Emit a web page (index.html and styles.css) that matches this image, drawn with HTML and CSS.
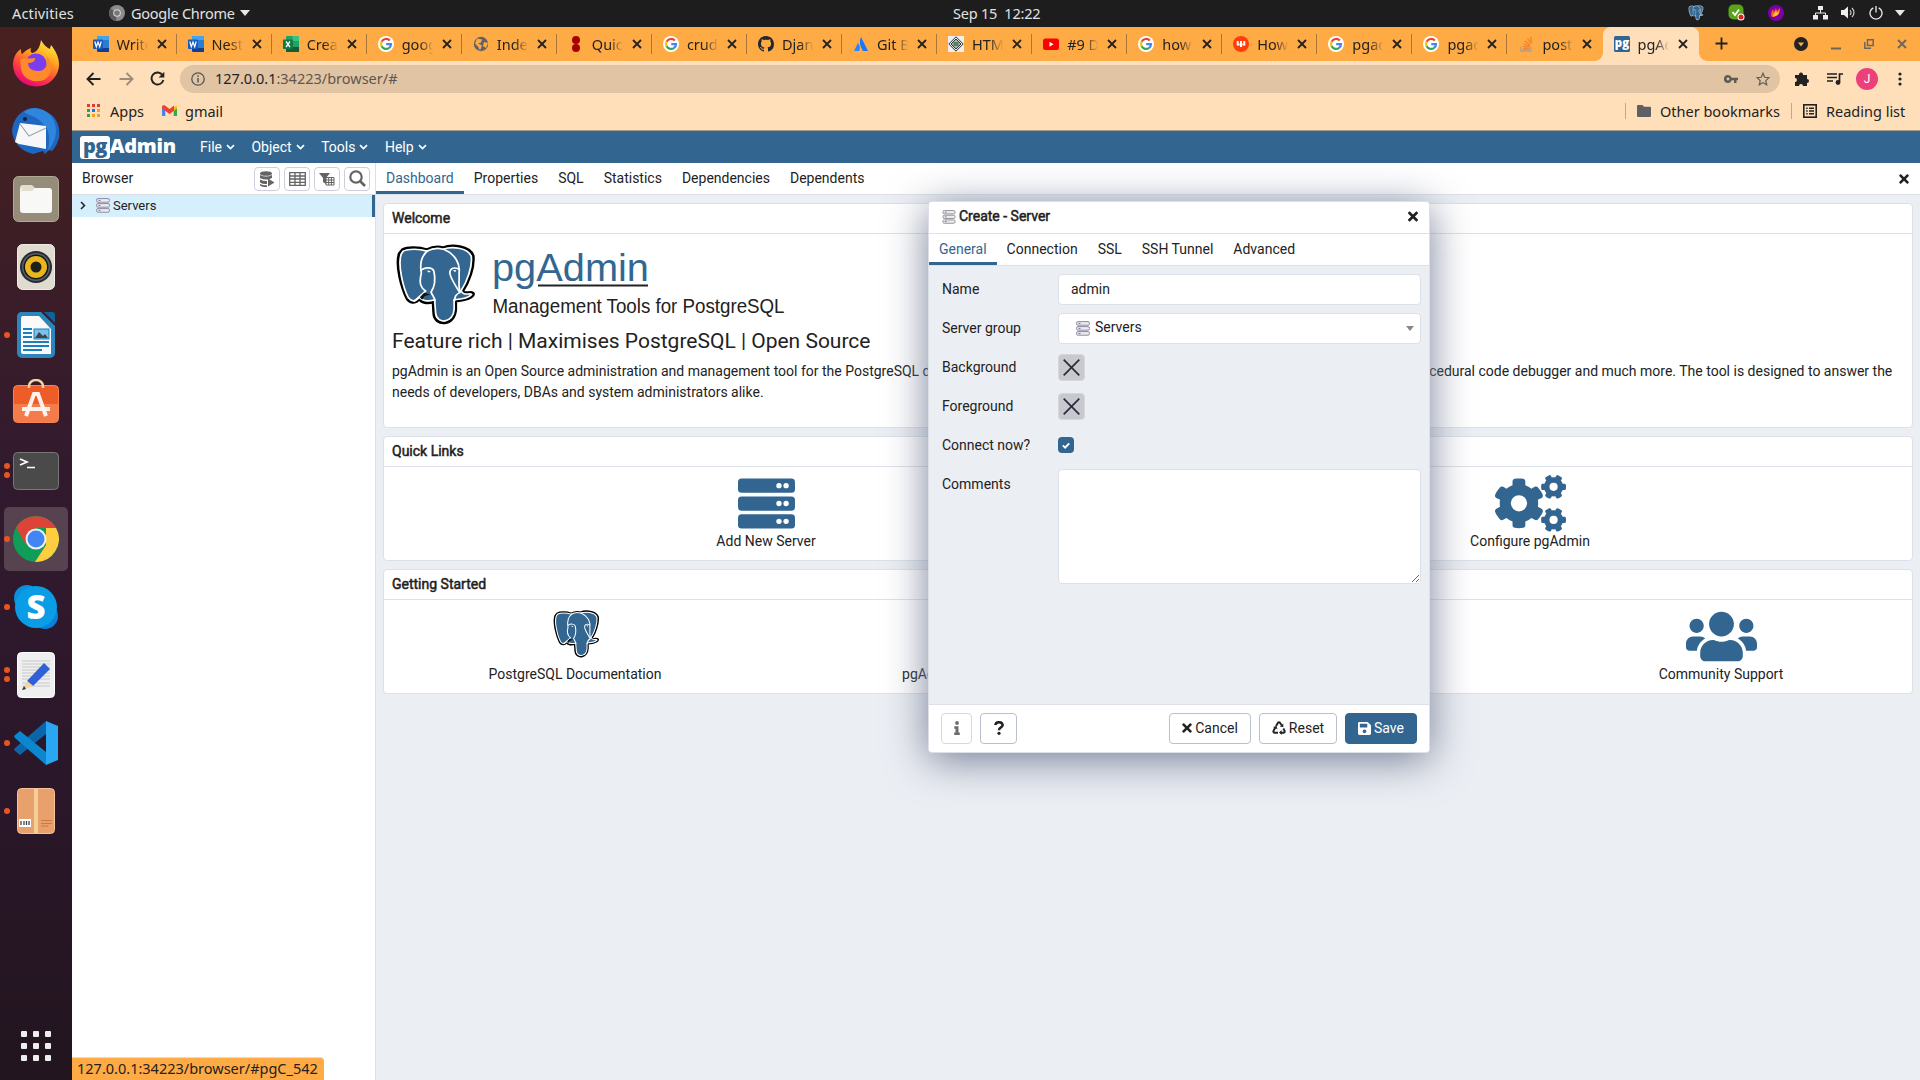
FILE: index.html
```html
<!DOCTYPE html>
<html lang="en">
<head>
<meta charset="utf-8">
<title>pgAdmin 4</title>
<link rel="stylesheet" href="styles.css">
</head>
<body>
<svg class="defs" aria-hidden="true">
  <symbol id="elephant" viewBox="-6 -6 232 256" preserveAspectRatio="none">
    <path d="M14 12C28 3 62 4 84 12C100 3 118 2 130 6C155-5 205 0 216 30C220 65 203 112 186 140C196 152 214 136 217 148C216 160 192 168 166 170L166 195C164 248 106 250 104 208L102 172C88 178 66 176 62 162C54 176 38 178 28 164C12 130-6 60 5 24Z" fill="#fff" stroke="#000" stroke-width="9" stroke-linejoin="round"/>
    <path d="M16 16C30 8 62 8 84 16C100 7 118 6 130 10C155 1 200 4 211 32C215 65 198 112 182 138C190 158 208 142 212 150C206 158 190 164 162 166L162 195C160 240 112 242 109 208L106 166C88 172 72 170 62 158C50 174 40 172 31 160C16 130 0 60 10 26Z" fill="#336791" stroke="#fff" stroke-width="5"/>
    <g fill="none" stroke="#fff" stroke-width="5" stroke-linecap="round">
      <path d="M88 14C65 32 64 60 68 84C60 118 68 130 80 139L48 170"/>
      <path d="M68 74C82 64 100 66 104 78C110 108 106 126 96 142C98 152 106 156 107 170"/>
      <path d="M132 10C166 25 180 58 176 82C178 108 172 128 180 142"/>
      <path d="M176 72C158 62 146 72 151 90C158 112 170 128 178 144C166 150 164 156 163 170"/>
    </g>
    <path d="M64 158L76 144L94 150L78 154L70 166Z" fill="#111"/>
    <path d="M83 76l12 1-5 6zM158 75l10-1-3 7z" fill="#fff"/>
  </symbol>
  <symbol id="g" viewBox="0 0 16 16"><circle cx="8" cy="8" r="8" fill="#fff"/><g fill="none" stroke-width="2.2"><path d="M11.8 4.6A5 5 0 0 0 3.6 5.7" stroke="#ea4335"/><path d="M3.7 5.5a5 5 0 0 0 0 5" stroke="#fbbc05"/><path d="M3.6 10.3a5 5 0 0 0 7.6 1.5" stroke="#34a853"/><path d="M8.2 8.1H13a5 5 0 0 1-1.9 3.8" stroke="#4285f4"/></g></symbol>
  <symbol id="x" viewBox="0 0 10 10"><path d="M1 1l8 8M9 1l-8 8" stroke="currentColor" stroke-width="1.8"/></symbol>
  <symbol id="word" viewBox="0 0 16 16"><rect x="4" width="12" height="16" rx="1" fill="#2b7cd3"/><path d="M4 0h11l1 1v3H4z" fill="#41a5ee"/><path d="M4 12h12v4H5l-1-1z" fill="#103f91"/><rect y="3.5" width="10" height="9.5" rx=".8" fill="#185abd"/><path d="M1.8 5.5l1.5 5.2L5 6l1.7 4.7L8.2 5.5" fill="none" stroke="#fff" stroke-width="1.2"/></symbol>
  <symbol id="times" viewBox="0 0 352 512"><path fill="currentColor" d="M242.72 256l100.07-100.07c12.28-12.28 12.28-32.19 0-44.48l-22.24-22.24c-12.28-12.28-32.19-12.28-44.48 0L176 189.28 75.93 89.21c-12.28-12.28-32.19-12.28-44.48 0L9.21 111.45c-12.28 12.28-12.28 32.19 0 44.48L109.28 256 9.21 356.07c-12.28 12.28-12.28 32.19 0 44.48l22.24 22.24c12.28 12.28 32.2 12.28 44.48 0L176 322.72l100.07 100.07c12.28 12.28 32.2 12.28 44.48 0l22.24-22.24c12.28-12.28 12.28-32.19 0-44.48L242.72 256z"/></symbol>
  <symbol id="chev" viewBox="0 0 9 6"><path d="M1 1.200L4.500 4.500 8 1.200" fill="none" stroke="currentColor" stroke-width="1.700"/></symbol>
  <symbol id="srv" viewBox="0 0 14 15"><g fill="#ecebf2" stroke="#8e8ba3"><rect x=".5" y=".6" width="13" height="3.600" rx="1.500"/><rect x=".5" y="5.600" width="13" height="3.600" rx="1.500"/><rect x=".5" y="10.600" width="13" height="3.600" rx="1.500"/></g><path d="M2.500 2.400h2M2.500 7.400h2M2.500 12.400h2" stroke="#77758c"/></symbol>
</svg>

<header class="topbar">
  <span class="activities">Activities</span>
  <span class="appname"><svg width="16" height="16" viewBox="0 0 16 16"><circle cx="8" cy="8" r="8" fill="#8c8c8c"/><path d="M8 8L1.500 3.500A8 8 0 0 0 7 16z" fill="#5c5c5c"/><circle cx="8" cy="8" r="3.800" fill="#ddd"/><circle cx="8" cy="8" r="2.800" fill="#777"/></svg><span>Google Chrome</span><i class="tri"></i></span>
  <span class="clock">Sep 15&nbsp; 12:22</span>
  <span class="tray">
    <svg class="t1" width="16" height="16"><use href="#elephant"/></svg>
    <svg class="t2" width="17" height="17" viewBox="0 0 17 17"><rect x=".5" y=".5" width="15" height="15" rx="5" fill="#5ba31b"/><path d="M4.500 8l2.500 3L11 5.500" fill="none" stroke="#fff" stroke-width="1.800"/><circle cx="13" cy="13" r="3.500" fill="#fff"/><circle cx="13" cy="13" r="2.500" fill="#e02020"/></svg>
    <svg class="t3" width="16" height="16" viewBox="0 0 16 16"><circle cx="8" cy="8" r="8" fill="#7b00a8"/><path d="M4 12C2 9 4 6 5 4l1 3 2-4 1 3 3-3c0 4 0 8-8 9z" fill="#ff5a1f"/><path d="M5 11.500C5 9 7 8 8 6l1 2 2-2c0 3-2 5.500-6 5.500z" fill="#ffc928"/></svg>
    <svg class="t4" width="15" height="14" viewBox="0 0 15 14"><g fill="#eee"><rect x="5" width="5" height="4"/><rect y="9" width="5" height="4.500"/><rect x="10" y="9" width="5" height="4.500"/></g><path d="M7.500 4v3M2.500 9V7h10v2" fill="none" stroke="#eee"/></svg>
    <svg class="t5" width="15" height="13" viewBox="0 0 15 13"><path d="M0 4h3l4-3.500v12L3 9H0z" fill="#eee"/><path d="M9 4q2 2.500 0 5M11 2q4 4.500 0 9" fill="none" stroke="#ccc" stroke-width="1.200"/></svg>
    <svg class="t6" width="14" height="14" viewBox="0 0 14 14"><path d="M4.300 1.800a6 6 0 1 0 5.400 0M7 0v6.500" fill="none" stroke="#eee" stroke-width="1.300"/></svg>
    <i class="tri"></i>
  </span>
</header>

<div class="desktop">
<nav class="dock">
  <div class="app"><svg width="46" height="48" viewBox="0 0 46 48"><defs><linearGradient id="ff" x1=".8" y1="0" x2=".3" y2="1"><stop offset="0" stop-color="#fff34a"/><stop offset=".35" stop-color="#ffa61e"/><stop offset=".65" stop-color="#ff4a3a"/><stop offset="1" stop-color="#e6007a"/></linearGradient></defs><path d="M28 1c3 5 5 7 9 9 0-2 1-3 1-4 5 6 8 13 8 19a23 22 0 0 1-46 1C0 19 3 13 8 10c0 3 0 4 1 5 3-3 6-5 9-6-1 3 0 4 1 5 4 0 8-5 9-13z" fill="url(#ff)"/><circle cx="23" cy="25" r="10.500" fill="#7a3df0"/><path d="M7 20c5-1 10 0 15-1 1 3-3 5-7 5 0 5 4 8 10 8 8 0 12-8 8-15 8 6 7 19-2 24-10 4-22-1-23-12z" fill="#ff8a2c"/></svg></div>
  <div class="app"><svg width="48" height="48" viewBox="0 0 48 48"><path d="M9 6C17-1 27 0 34 5c10 3 15 15 13 26-2 6-4 10-7 13l-3-1-4 4-2-3-10 3C8 44 1 35 0 24 1 15 4 10 9 6z" fill="#1f66c0"/><path d="M12 5C22-3 38 3 42 14c4 10 2 20-6 30 2-12 2-21-5-27C24 8 17 9 12 5z" fill="#2e87dc"/><path d="M8 16l26 3v23L7 37l-4-2z" fill="#f7f7f9"/><path d="M8 17l9 12 17-8" fill="none" stroke="#9aa" stroke-width="1.200"/><circle cx="13" cy="12" r="2" fill="#123"/></svg></div>
  <div class="app"><svg width="46" height="46" viewBox="0 0 46 46"><rect x=".5" y=".5" width="45" height="45" rx="5" fill="#958d79" stroke="#b0a994"/><path d="M7 12a3 3 0 0 1 3-3h9l3 3v6H7z" fill="#e2ddcf"/><rect x="7" y="12" width="32" height="25" rx="3" fill="#f8f8f7"/><path d="M7 16a2 2 0 0 1 2-1h10l3-3H10z" fill="#e2ddcf"/></svg></div>
  <div class="app"><svg width="38" height="46" viewBox="0 0 38 46"><rect x=".5" y=".5" width="37" height="45" rx="5" fill="#e0dbd0" stroke="#f0ede4"/><circle cx="19" cy="23" r="16" fill="#2b2b30"/><circle cx="19" cy="23" r="14" fill="#55606c"/><circle cx="19" cy="23" r="12.500" fill="#16161a"/><circle cx="19" cy="23" r="11" fill="#e9b61c"/><circle cx="19" cy="23" r="5.500" fill="#1e1e1e"/></svg></div>
  <div class="app one"><svg width="38" height="46" viewBox="0 0 38 46"><path d="M4 0h20l14 14v27a5 5 0 0 1-5 5H5a5 5 0 0 1-5-5V5a5 5 0 0 1 4-5z" fill="#2c86bb"/><path d="M27 0h8q3 0 3 3v8z" fill="#10639a"/><path d="M6 4h16l12 13v25H6a2 2 0 0 1-2-2V6a2 2 0 0 1 2-2z" fill="#fafafa"/><path d="M6 17h9M6 21h9M6 25h9M6 30h26M6 34h26M6 38h19" stroke="#1a7fbd" stroke-width="2"/><rect x="17" y="17" width="15" height="10" fill="#79c0ea" stroke="#1a7fbd"/><path d="M18 26l4-6 4 4 2-2 3 4z" fill="#444"/></svg></div>
  <div class="app bag"><svg width="46" height="44" viewBox="0 0 46 44"><rect x=".5" y="6.500" width="45" height="37" rx="4" fill="#ee5d28" stroke="#f58657"/><path d="M1 25h44v15a3 3 0 0 1-3 3H4a3 3 0 0 1-3-3z" fill="#f37c4a"/><path d="M16 9V7a7 6 0 0 1 14 0v2" fill="none" stroke="#f5d5a0" stroke-width="2.500"/><path d="M13 37l8-22h4l8 22M9 30h28" fill="none" stroke="#fdf3ec" stroke-width="4"/></svg></div>
  <div class="app two"><svg width="46" height="38" viewBox="0 0 46 38"><rect x=".5" y=".5" width="45" height="37" rx="4" fill="#4a4a4a" stroke="#777"/><path d="M7 7l7 3-7 3M14 15.500h8" fill="none" stroke="#fff" stroke-width="1.700"/></svg></div>
  <div class="app one active"><svg width="46" height="46" viewBox="0 0 46 46"><circle cx="23" cy="23" r="23" fill="#109d58"/><path d="M3.100 11.500A23 23 0 0 1 43 12H23L13 29z" fill="#db4437"/><path d="M43 12A23 23 0 0 1 22 46l11-17V12z" fill="#ffcd40"/><circle cx="23" cy="23" r="10.500" fill="#f1f1f1"/><circle cx="23" cy="23" r="8.500" fill="#4285f4"/></svg></div>
  <div class="app one"><svg width="44" height="44" viewBox="0 0 44 44"><circle cx="13" cy="13" r="13" fill="#0a8fdc"/><circle cx="31" cy="31" r="13" fill="#0a7fdc"/><circle cx="22" cy="22" r="21" fill="#0b9ce6"/><text x="22" y="34" text-anchor="middle" font-family="Open Sans, sans-serif" font-size="33" font-weight="800" fill="#fff">S</text></svg></div>
  <div class="app two"><svg width="38" height="46" viewBox="0 0 38 46"><rect x=".5" y=".5" width="37" height="45" rx="4" fill="#efeff0" stroke="#fff"/><path d="M5 9h28M5 12h28M5 15h28M5 18h28M5 21h28M5 24h28M5 27h28M5 31h28M5 34h28" stroke="#c8c8cb"/><path d="M10 29l17-18 6 6-17 17z" fill="#2f60d8"/><path d="M10 29l6 5-11 4z" fill="#f2d4a8"/><path d="M5 38l2-4 2 3z" fill="#333"/></svg></div>
  <div class="app one"><svg width="44" height="44" viewBox="0 0 44 44"><path d="M32 0v13L6 34l-6-5 1-2z" fill="#0a66a8"/><path d="M0 15l6-5 26 21v13L1 17z" fill="#0d86d0"/><path d="M32 0l12 5v34l-12 5z" fill="#2aa6f2"/></svg></div>
  <div class="app one"><svg width="38" height="46" viewBox="0 0 38 46"><rect x=".5" y=".5" width="37" height="45" rx="4" fill="#e8a16c" stroke="#f4c49a"/><rect x="17" y="1" width="4" height="44" fill="#f3cf98"/><rect x="2" y="31" width="12" height="8" fill="#fff"/><path d="M4 33v4M7 33v4M9.500 33v4M12 33v4" stroke="#444" stroke-width="1.300"/><path d="M24 32.500h11M24 35.500h11M24 38h7" stroke="#d2783c" stroke-width="1.200"/></svg></div>
  <div class="grid9"><i></i><i></i><i></i><i></i><i></i><i></i><i></i><i></i><i></i></div>
</nav>

<div class="window">
  <div class="tabstrip">
    <div class="tab"><svg class="fav"><use href="#word"/></svg><span>Write</span><svg class="cx"><use href="#x"/></svg></div>
    <div class="tab"><svg class="fav"><use href="#word"/></svg><span>Neste</span><svg class="cx"><use href="#x"/></svg></div>
    <div class="tab"><svg class="fav" viewBox="0 0 16 16"><rect x="3" width="13" height="16" rx="1" fill="#21a366"/><path d="M9.500 0H16v5H9.500z" fill="#33c481"/><path d="M3 11h13v5H3z" fill="#185c37"/><rect y="3.500" width="10" height="9.500" rx=".8" fill="#107c41"/><path d="M3 5.500l4 5.500M7 5.500L3 11" stroke="#fff" stroke-width="1.300"/></svg><span>Creat</span><svg class="cx"><use href="#x"/></svg></div>
    <div class="tab"><svg class="fav"><use href="#g"/></svg><span>goog</span><svg class="cx"><use href="#x"/></svg></div>
    <div class="tab"><svg class="fav" viewBox="0 0 16 16"><circle cx="8" cy="8" r="7.200" fill="#5f6368"/><path d="M4 2.500l5 1-1 3-3 1 4 2-2 5-2-4-3-3zM11 6l4 1-2 5-3-2z" fill="#ffab45"/></svg><span>Index</span><svg class="cx"><use href="#x"/></svg></div>
    <div class="tab"><svg class="fav" viewBox="0 0 16 16"><circle cx="8" cy="4" r="4" fill="#a80000"/><circle cx="8" cy="12" r="4" fill="#a80000"/></svg><span>Quick</span><svg class="cx"><use href="#x"/></svg></div>
    <div class="tab"><svg class="fav"><use href="#g"/></svg><span>crud</span><svg class="cx"><use href="#x"/></svg></div>
    <div class="tab"><svg class="fav" viewBox="0 0 16 16"><path fill="#24292e" d="M8 0C3.580 0 0 3.580 0 8c0 3.540 2.290 6.530 5.470 7.590.4.070.55-.17.55-.38 0-.19-.01-.82-.01-1.490-2.010.37-2.530-.49-2.690-.94-.09-.23-.48-.94-.82-1.130-.28-.15-.68-.52-.01-.53.63-.01 1.080.58 1.230.82.72 1.210 1.870.87 2.330.66.07-.52.28-.87.51-1.070-1.780-.2-3.640-.89-3.640-3.950 0-.87.31-1.590.82-2.150-.08-.2-.36-1.020.08-2.120 0 0 .67-.21 2.200.82.64-.18 1.320-.27 2-.27s1.360.09 2 .27c1.530-1.040 2.200-.82 2.200-.82.44 1.100.16 1.920.08 2.120.51.56.82 1.270.82 2.150 0 3.070-1.870 3.750-3.650 3.950.29.25.54.73.54 1.480 0 1.070-.01 1.930-.01 2.200 0 .21.15.46.55.38A8.010 8.010 0 0 0 16 8c0-4.420-3.580-8-8-8z"/></svg><span>Djan</span><svg class="cx"><use href="#x"/></svg></div>
    <div class="tab"><svg class="fav" viewBox="0 0 16 16"><path d="M5 7q3 4 1 8H1z" fill="#2684ff"/><path d="M8 1l7 14h-5Q5 7 8 1z" fill="#1677ff"/></svg><span>Git Br</span><svg class="cx"><use href="#x"/></svg></div>
    <div class="tab"><svg class="fav" viewBox="0 0 16 16"><rect width="16" height="16" fill="#eee"/><path d="M8 .8L15.200 8 8 15.200.8 8z" fill="none" stroke="#333"/><path d="M8 3l5 5-5 5-5-5z" fill="#9ab8a4" stroke="#333"/><path d="M5.500 7h5M5.500 9h5" stroke="#243"/></svg><span>HTML</span><svg class="cx"><use href="#x"/></svg></div>
    <div class="tab"><svg class="fav" viewBox="0 0 16 16"><rect y="2.500" width="16" height="11.500" rx="2.500" fill="#f00"/><path d="M6.500 5.800v5l4-2.500z" fill="#fff"/></svg><span>#9 Dj</span><svg class="cx"><use href="#x"/></svg></div>
    <div class="tab"><svg class="fav"><use href="#g"/></svg><span>how t</span><svg class="cx"><use href="#x"/></svg></div>
    <div class="tab"><svg class="fav" viewBox="0 0 16 16"><circle cx="8" cy="8" r="8" fill="#ff3d0a"/><path d="M4.700 5v4.500M8 5v6M11.300 5v4.500" fill="none" stroke="#fff" stroke-width="2"/><path d="M4.500 7.500h7v2h-7z" fill="#fff" opacity=".7"/></svg><span>How t</span><svg class="cx"><use href="#x"/></svg></div>
    <div class="tab"><svg class="fav"><use href="#g"/></svg><span>pgad</span><svg class="cx"><use href="#x"/></svg></div>
    <div class="tab"><svg class="fav"><use href="#g"/></svg><span>pgad</span><svg class="cx"><use href="#x"/></svg></div>
    <div class="tab last"><svg class="fav" viewBox="0 0 16 16"><path d="M3 10.500V15h10v-4.500" fill="none" stroke="#a9a39b" stroke-width="1.300"/><path d="M5 13h6.500M5 10.500l6.500.7M5.500 8l6 2M7 5l5 4M9.500 2.500l3.500 5M12.500.8l1.200 5.700" stroke="#f48024" stroke-width="1.300"/></svg><span>postg</span><svg class="cx"><use href="#x"/></svg></div>
    <div class="tab current"><svg class="fav" viewBox="0 0 16 16"><rect width="16" height="16" rx="1.500" fill="#326690"/><text x="8" y="11" text-anchor="middle" font-family="Open Sans, sans-serif" font-size="11.500" font-weight="800" fill="#fff">pg</text></svg><span>pgAd</span><svg class="cx"><use href="#x"/></svg></div>
    <svg class="plus" width="13" height="13" viewBox="0 0 13 13"><path d="M6.500.5v12M.5 6.500h12" stroke="#222" stroke-width="1.800"/></svg>
    <div class="wctl">
      <svg width="14" height="14" viewBox="0 0 14 14"><circle cx="7" cy="7" r="7" fill="#222"/><path d="M4 5.500h6L7 9.500z" fill="#ffab45"/></svg>
      <svg width="10" height="12" viewBox="0 0 10 12"><path d="M0 10.500h10" stroke="#6b6661" stroke-width="2"/></svg>
      <svg width="10" height="10" viewBox="0 0 10 10"><path d="M3.500.8h5.700v5.700H3.500zM.8 3v6.200H7" fill="none" stroke="#6b6661" stroke-width="1.500"/></svg>
      <svg width="10" height="10"><use href="#x"/></svg>
    </div>
  </div>

  <div class="toolbar">
    <svg class="b1" width="15" height="14" viewBox="0 0 15 14"><path d="M14.500 7H1.500M7.500 1l-6 6 6 6" fill="none" stroke="#222" stroke-width="1.900"/></svg>
    <svg class="b2" width="15" height="14" viewBox="0 0 15 14"><path d="M.5 7h13M7.500 1l6 6-6 6" fill="none" stroke="#9d8c78" stroke-width="1.900"/></svg>
    <svg class="b3" width="15" height="15" viewBox="0 0 15 15"><path d="M12.600 4.200A6 6 0 1 0 13.400 9" fill="none" stroke="#222" stroke-width="1.900"/><path d="M14.300.8v5.700H8.600z" fill="#222"/></svg>
    <div class="omnibox">
      <svg width="14" height="14" viewBox="0 0 14 14"><circle cx="7" cy="7" r="6.200" fill="none" stroke="#555" stroke-width="1.300"/><path d="M7 6v4.500M7 3.300v1.500" stroke="#555" stroke-width="1.500"/></svg>
      <span class="url">127.0.0.1<em>:34223/browser/#</em></span>
      <svg class="key" width="14" height="8" viewBox="0 0 14 8"><path d="M4 0a4 4 0 1 0 3.700 5.300H10V8h2.500V5.300H14V2.700H7.700A4 4 0 0 0 4 0zm0 2.600a1.400 1.400 0 1 1 0 2.800 1.400 1.400 0 0 1 0-2.800z" fill="#5f5b56"/></svg>
      <svg width="14" height="14" viewBox="0 0 14 14"><path d="M7 1.300l1.700 4 4.300.4-3.200 2.900.9 4.200L7 10.600l-3.700 2.200.9-4.200L1 5.700l4.300-.4z" fill="none" stroke="#5f5b56" stroke-width="1.200"/></svg>
    </div>
    <svg class="ext" width="15" height="15" viewBox="0 0 15 15"><path d="M0 4h4a2 2 0 1 1 4-1v1h4v4a2 2 0 1 1 0 4v3H8a2 2 0 1 0-4 0H0v-4a2 2 0 1 0 0-4z" fill="#222"/></svg>
    <svg class="mus" width="16" height="12" viewBox="0 0 16 12"><path d="M0 1h10M0 4.500h10M0 8h6M12.500 9V1H16" fill="none" stroke="#222" stroke-width="1.700"/><circle cx="11" cy="9.500" r="2.400" fill="#222"/></svg>
    <span class="avatar">J</span>
    <svg width="4" height="14" viewBox="0 0 4 14" fill="#222"><circle cx="2" cy="2" r="1.600"/><circle cx="2" cy="7" r="1.600"/><circle cx="2" cy="12" r="1.600"/></svg>
  </div>

  <div class="bookmarks">
    <svg width="13" height="13" viewBox="0 0 13 13"><path d="M0 0h3v3H0zM5 0h3v3H5zM10 0h3v3h-3z" fill="#e53935"/><path d="M0 5h3v3H0z" fill="#2e9e4f"/><path d="M5 5h3v3H5z" fill="#1a73e8"/><path d="M10 5h3v3h-3z" fill="#f4a01c"/><path d="M0 10h3v3H0z" fill="#2e9e4f"/><path d="M5 10h3v3H5zM10 10h3v3h-3z" fill="#f4a01c"/></svg>
    <span class="apps">Apps</span>
    <svg width="15" height="11" viewBox="0 0 15 11"><path d="M0 2v9h3.300V4z" fill="#4285f4"/><path d="M15 2v9h-3.300V4z" fill="#34a853"/><path d="M11.700 2L15 1v2.500l-3.300 2.400z" fill="#fbbc04"/><path d="M0 1.500C.3 0 2 0 3 .6l4.500 3.400L12 .6v5.100L7.500 9 0 3.500z" fill="#ea4335"/></svg>
    <span class="gm">gmail</span>
    <i class="vsep"></i>
    <svg class="fold" width="14" height="12" viewBox="0 0 14 12"><path d="M1 0h4.500L7 1.700h6q1 0 1 1V11q0 1-1 1H1q-1 0-1-1V1q0-1 1-1z" fill="#5f6063"/></svg>
    <span class="ob">Other bookmarks</span>
    <i class="vsep"></i>
    <svg class="fold" width="14" height="14" viewBox="0 0 14 14"><rect x=".8" y=".8" width="12.400" height="12.400" fill="none" stroke="#222" stroke-width="1.600"/><path d="M3.200 4.200h1.500M6 4.200h5M3.200 7h1.500M6 7h5M3.200 9.800h1.500M6 9.800h5" stroke="#222" stroke-width="1.400"/></svg>
    <span class="rl">Reading list</span>
  </div>

  <div class="page">
    <nav class="menu">
      <span class="brand"><b>pg</b><strong>Admin</strong></span>
      <span class="mi">File<svg><use href="#chev"/></svg></span><span class="mi">Object<svg><use href="#chev"/></svg></span><span class="mi">Tools<svg><use href="#chev"/></svg></span><span class="mi">Help<svg><use href="#chev"/></svg></span>
    </nav>
    <div class="split">
      <aside class="tree">
        <div class="treehead"><span>Browser</span>
          <button><svg width="16" height="16" viewBox="0 0 16 16" fill="#646464"><ellipse cx="7" cy="2.500" rx="6" ry="2.300"/><path d="M1 4q6 3 12 0v3q-6 3-12 0zM1 8.500q4 2 7 1.500v3q-4 .5-7-1.500zM1 13q3 1.500 7 1.300V16q-5 0-7-1.500zM9 7.500l6.500 4L9 15.500z"/></svg></button>
          <button><svg width="17" height="14" viewBox="0 0 17 14"><path d="M.7.700h15.600v12.600H.7zM1 4h15M1 7h15M1 10.300h15M6 1v12M11 1v12" fill="none" stroke="#646464" stroke-width="1.300"/></svg></button>
          <button><svg width="16" height="14" viewBox="0 0 16 14"><path d="M0 1h11L7 6v6L4 10V6z" fill="#646464"/><path d="M7 5.500h8v7.500H7zM7 8h8M7 10.500h8M9.700 6v7M12.400 6v7" fill="#fff" stroke="#646464"/></svg></button>
          <button><svg width="17" height="17" viewBox="0 0 17 17"><circle cx="7" cy="7" r="5.700" fill="none" stroke="#646464" stroke-width="2.200"/><path d="M11 11l5 5" stroke="#646464" stroke-width="2.600"/></svg></button>
        </div>
        <div class="node"><svg width="6" height="9" viewBox="0 0 6 9"><path d="M1 1l3.500 3.500L1 8" fill="none" stroke="#222" stroke-width="1.500"/></svg><svg class="srv" width="14" height="15"><use href="#srv"/></svg><span>Servers</span></div>
      </aside>
      <main class="main">
        <div class="ptabs"><span class="on">Dashboard</span><span>Properties</span><span>SQL</span><span>Statistics</span><span>Dependencies</span><span>Dependents</span><svg class="close" width="10" height="14"><use href="#times"/></svg></div>
        <div class="dash">
          <section class="card welcome"><h2>Welcome</h2>
            <div class="wbody">
              <svg class="logo" width="400" height="84" viewBox="0 0 400 84"><svg x="3.500" y="0" width="81" height="83"><use href="#elephant"/></svg>
                <text x="100" y="36.500" font-family="Liberation Sans, sans-serif" font-size="39" fill="#336791" textLength="157" lengthAdjust="spacingAndGlyphs">pgAdmin</text><rect x="146" y="40.500" width="110" height="2" fill="#222"/>
                <text x="100.500" y="68.500" font-family="Liberation Sans, sans-serif" font-size="19.500" fill="#222" textLength="292" lengthAdjust="spacingAndGlyphs">Management Tools for PostgreSQL</text></svg>
              <h4>Feature rich | Maximises PostgreSQL | Open Source</h4>
              <p>pgAdmin is an Open Source administration and management tool for the PostgreSQL database. It includes a graphical administration interface, an SQL query tool, a procedural code debugger and much more. The tool is designed to answer the needs of developers, DBAs and system administrators alike.</p>
            </div>
          </section>
          <section class="card"><h2>Quick Links</h2>
            <div class="links">
              <a><svg width="57" height="57" viewBox="0 0 512 512"><g fill="#326690"><rect y="32" width="512" height="128" rx="32"/><rect y="192" width="512" height="128" rx="32"/><rect y="352" width="512" height="128" rx="32"/></g><g fill="#fff"><circle cx="368" cy="96" r="24"/><circle cx="432" cy="96" r="24"/><circle cx="368" cy="256" r="24"/><circle cx="432" cy="256" r="24"/><circle cx="368" cy="416" r="24"/><circle cx="432" cy="416" r="24"/></g></svg><span>Add New Server</span></a>
              <a><svg width="71" height="57" viewBox="0 0 640 512"><g fill="#326690"><path id="sc" d="M512.100 191l-8.200 14.300c-3 5.300-9.400 7.500-15.100 5.400-11.800-4.400-22.600-10.700-32.100-18.600-4.600-3.800-5.800-10.500-2.800-15.700l8.200-14.300c-6.900-8-12.300-17.300-15.900-27.400h-16.500c-6 0-11.200-4.300-12.200-10.300-2-12-2.100-24.600 0-37.100 1-6 6.200-10.400 12.200-10.400h16.500c3.600-10.100 9-19.400 15.900-27.400l-8.200-14.300c-3-5.200-1.900-11.900 2.800-15.700 9.500-7.900 20.400-14.200 32.100-18.600 5.700-2.100 12.100.1 15.100 5.400l8.200 14.300c10.500-1.900 21.200-1.900 31.700 0L552 6.300c3-5.300 9.400-7.500 15.100-5.400 11.800 4.400 22.600 10.700 32.100 18.600 4.600 3.800 5.800 10.500 2.800 15.700l-8.200 14.300c6.900 8 12.300 17.300 15.900 27.400h16.500c6 0 11.200 4.300 12.200 10.300 2 12 2.100 24.600 0 37.100-1 6-6.200 10.400-12.200 10.400h-16.500c-3.600 10.100-9 19.400-15.900 27.400l8.200 14.300c3 5.200 1.900 11.900-2.800 15.700-9.500 7.900-20.400 14.200-32.100 18.600-5.700 2.100-12.100-.1-15.100-5.400l-8.200-14.300c-10.400 1.900-21.200 1.900-31.700 0z"/><use href="#sc" y="298"/><path d="M386.300 286.100l33.700 16.800c10.100 5.800 14.500 18.100 10.500 29.100-8.900 24.200-26.400 46.400-42.600 65.800-7.400 8.900-20.200 11.100-30.300 5.300l-29.100-16.800c-16 13.700-34.600 24.600-54.900 31.700v33.600c0 11.600-8.300 21.600-19.700 23.600-24.600 4.200-50.400 4.400-75.900 0-11.500-2-20-11.900-20-23.600V418c-20.300-7.200-38.900-18-54.900-31.700L74 403c-10 5.800-22.900 3.600-30.300-5.300-16.200-19.400-33.300-41.600-42.200-65.700-4-10.900.4-23.200 10.500-29.100l33.300-16.800c-3.900-20.900-3.900-42.400 0-63.400L12 205.800c-10.100-5.800-14.600-18.100-10.500-29 8.900-24.200 26-46.400 42.200-65.800 7.400-8.900 20.200-11.100 30.300-5.300l29.100 16.800c16-13.700 34.600-24.600 54.900-31.700V57.100c0-11.500 8.200-21.500 19.600-23.500 24.600-4.200 50.500-4.400 76-.1 11.500 2 20 11.900 20 23.600v33.600c20.300 7.200 38.900 18 54.900 31.700l29.100-16.800c10-5.800 22.900-3.600 30.300 5.300 16.200 19.400 33.200 41.600 42.100 65.800 4 10.900.1 23.200-10 29.100l-33.700 16.800c3.900 21 3.900 42.500 0 63.500z"/></g><g fill="#fff"><circle cx="216" cy="254" r="73"/><circle cx="528" cy="106" r="37"/><circle cx="528" cy="404" r="37"/></g></svg><span>Configure pgAdmin</span></a>
            </div>
          </section>
          <section class="card"><h2>Getting Started</h2>
            <div class="links">
              <a><svg class="el" width="47" height="49"><use href="#elephant"/></svg><span>PostgreSQL Documentation</span></a>
              <a><svg width="57" height="57" viewBox="0 0 57 57"><path d="M28.500 4a24 24 0 1 0 .1 0M5 28.500h47M28.500 5v47" fill="none" stroke="#326690" stroke-width="4"/></svg><span>pgAdmin Website</span></a>
              <a><svg width="57" height="57" viewBox="0 0 57 57"><path d="M6 8h45v41H6z" fill="#326690"/></svg><span>Planet PostgreSQL</span></a>
              <a><svg width="71" height="57" viewBox="0 0 640 512"><path fill="#326690" d="M96 224c35.300 0 64-28.700 64-64s-28.700-64-64-64-64 28.700-64 64 28.700 64 64 64zm448 0c35.300 0 64-28.700 64-64s-28.700-64-64-64-64 28.700-64 64 28.700 64 64 64zm32 32h-64c-17.600 0-33.500 7.100-45.100 18.600 40.300 22.100 68.900 62 75.100 109.400h66c17.700 0 32-14.300 32-32v-32c0-35.300-28.700-64-64-64zm-256 0c61.900 0 112-50.100 112-112S381.900 32 320 32 208 82.100 208 144s50.100 112 112 112zm76.800 32h-8.300c-20.800 10-43.900 16-68.500 16s-47.600-6-68.500-16h-8.300C179.600 288 128 339.600 128 403.200V432c0 26.500 21.500 48 48 48h288c26.500 0 48-21.500 48-48v-28.800c0-63.600-51.600-115.200-115.200-115.200zm-223.700-13.400C161.500 263.100 145.600 256 128 256H64c-35.300 0-64 28.700-64 64v32c0 17.700 14.300 32 32 32h65.900c6.300-47.400 34.900-87.300 75.200-109.400z"/></svg><span>Community Support</span></a>
            </div>
          </section>
        </div>
        <div class="dialog">
          <div class="dhead"><svg class="srv" width="14" height="14"><use href="#srv"/></svg><span>Create - Server</span><svg class="close" width="10" height="15"><use href="#times"/></svg></div>
          <div class="dtabs"><span class="on">General</span><span>Connection</span><span>SSL</span><span>SSH Tunnel</span><span>Advanced</span></div>
          <div class="form">
            <div class="row"><label>Name</label><div class="input">admin</div></div>
            <div class="row"><label>Server group</label><div class="input select"><svg width="14" height="15"><use href="#srv"/></svg><span>Servers</span><i class="tri"></i></div></div>
            <div class="row"><label>Background</label><div class="swatch"><svg width="17" height="17" viewBox="0 0 17 17"><path d="M.7.700l15.600 15.600M16.300.7L.7 16.300" stroke="#2b2b3a" stroke-width="1.700"/></svg></div></div>
            <div class="row"><label>Foreground</label><div class="swatch"><svg width="17" height="17" viewBox="0 0 17 17"><path d="M.7.700l15.600 15.600M16.300.7L.7 16.300" stroke="#2b2b3a" stroke-width="1.700"/></svg></div></div>
            <div class="row"><label>Connect now?</label><div class="check"><svg width="8" height="7" viewBox="0 0 8 7"><path d="M.8 3.400l2.300 2.200L7.200 1.300" fill="none" stroke="#fff" stroke-width="1.900"/></svg></div></div>
            <div class="row"><label>Comments</label><textarea></textarea></div>
          </div>
          <div class="foot">
            <button class="ib"><svg width="6" height="14" viewBox="0 0 6 14" fill="#6c6c6c"><circle cx="3" cy="2" r="1.900"/><path d="M.3 5.200h4.200v6.300h1.300V14H.2v-2.500h1.300V7.700H.3z"/></svg></button>
            <button class="qb"><svg width="10" height="14" viewBox="0 0 10 14"><path d="M1.200 4Q2 1.200 5 1.200T8.700 4C8.700 6.700 5 6 5 9.200" fill="none" stroke="#222" stroke-width="2.500"/><circle cx="5" cy="12.300" r="1.600" fill="#222"/></svg></button>
            <button class="cb"><svg width="10" height="14"><use href="#times"/></svg>Cancel</button>
            <button class="rb"><svg width="14" height="14" viewBox="0 0 14 14"><path d="M4 5l2-3.200q1-1 2 0L9.500 4M3.300 6.500L1.500 9.800q-.5 1.700 1.300 1.900H6M9 11.700h2.500q1.700-.4 1-2.100L11.300 7.500" fill="none" stroke="#222" stroke-width="2"/><path d="M11.300 2.500v3.700L7.800 5.500zM1 6l3.500-1 1 3.300zM9.600 9v5L7 11.600z" fill="#222"/></svg>Reset</button>
            <button class="sb"><svg width="13" height="15" viewBox="0 0 448 512"><path fill="#fff" d="M433.941 129.941l-83.882-83.882A48 48 0 0 0 316.118 32H48C21.490 32 0 53.490 0 80v352c0 26.510 21.490 48 48 48h352c26.510 0 48-21.490 48-48V163.882a48 48 0 0 0-14.059-33.941zM224 416c-35.346 0-64-28.654-64-64 0-35.346 28.654-64 64-64s64 28.654 64 64c0 35.346-28.654 64-64 64zm96-304.520V212c0 6.627-5.373 12-12 12H76c-6.627 0-12-5.373-12-12V108c0-6.627 5.373-12 12-12h228.520c3.183 0 6.235 1.264 8.485 3.515l3.480 3.480A11.996 11.996 0 0 1 320 111.480z"/></svg>Save</button>
          </div>
        </div>
      </main>
    </div>
  </div>
  <div class="status">127.0.0.1:34223/browser/#pgC_542</div>
</div>
</div>
</body>
</html>
```
FILE: styles.css
```css
* { box-sizing: border-box; }
body { margin: 0; width: 1920px; height: 1080px; overflow: hidden; display: flex; flex-direction: column; color: #222; font: 14px Roboto, sans-serif; }
svg { display: block; flex: none; }
.defs { position: absolute; width: 0; height: 0; }
.tri { width: 0; height: 0; border: 5px solid transparent; border-top: 6px solid #e8e8e8; border-bottom: 0; }

/* GNOME top bar */
.topbar { height: 27px; padding-bottom: 2px; background: #1d1d1d; color: #e2e2e2; display: flex; align-items: center; font: 14.5px "Noto Sans", sans-serif; flex: none; white-space: pre; }
.activities { width: 97px; padding-left: 12px; letter-spacing: .15px; }
.appname { display: flex; align-items: center; width: 844px; padding-left: 12px; }
.appname svg { margin-right: 6px; }
.appname > span { width: 104px; letter-spacing: -.25px; }
.appname .tri { margin-left: 5px; }
.clock { flex: 1; padding-left: 12px; letter-spacing: -.2px; }
.tray { display: flex; align-items: center; padding-right: 15px; }
.t1 { margin-right: 24px; }
.t2 { margin-right: 23px; }
.t3 { margin-right: 29px; }
.t4 { margin-right: 13px; }
.t5 { margin-right: 13px; }
.t6 { margin-right: 12px; }

.desktop { flex: 1; display: flex; min-height: 0; }

/* Launcher */
.dock { width: 72px; padding-top: 2px; background: linear-gradient(#48211f 0, #3d1e26 20%, #321a2e 42%, #2b172a 70%, #22151f 100%); display: flex; flex-direction: column; align-items: center; position: relative; flex: none; }
.app { width: 64px; height: 64px; margin: 2px 0; border-radius: 5px; display: flex; align-items: center; justify-content: center; position: relative; }
.app.bag { padding-bottom: 5px; }
.app.active { background: #56434f; }
.app.one::before, .app.two::before { content: ""; position: absolute; left: 0; top: 29px; width: 6px; height: 6px; border-radius: 50%; background: #e95420; }
.app.two::before { top: 24px; box-shadow: 0 9px #e95420; }
.grid9 { margin-top: auto; margin-bottom: 19px; display: grid; grid-template-columns: repeat(3, 6px); gap: 6px; }
.grid9 i { height: 6px; border-radius: 1px; background: #eee; }

/* Browser chrome */
.window { flex: 1; display: flex; flex-direction: column; position: relative; min-width: 0; font-family: "Noto Sans", sans-serif; font-size: 14.5px; }
.tabstrip { height: 34px; background: #ffab45; display: flex; padding-left: 9.5px; align-items: stretch; flex: none; }
.tab { width: 95.07px; padding: 0 0 1px 11px; display: flex; align-items: center; position: relative; flex: none; }
.tab::after { content: ""; position: absolute; right: 0; top: 7px; height: 20px; width: 1px; background: #a9763a; }
.tab.last::after { display: none; }
.fav { width: 16px; height: 16px; margin-right: 8px; }
.tab span { width: 32px; overflow: hidden; white-space: nowrap; -webkit-mask-image: linear-gradient(90deg, #000 55%, transparent 98%); mask-image: linear-gradient(90deg, #000 55%, transparent 98%); }
.cx { width: 10px; height: 10px; margin-left: 8px; }
.tab.current { background: #ffdfb9; border-radius: 8px 8px 0 0; width: 96px; }
.tab.current::before { content: ""; position: absolute; left: -8px; bottom: 0; width: 8px; height: 8px; background: radial-gradient(circle at 0 0, transparent 7.5px, #ffdfb9 8px); }
.tab.current::after { left: 100%; top: auto; bottom: 0; width: 8px; height: 8px; background: radial-gradient(circle at 100% 0, transparent 7.5px, #ffdfb9 8px); }
.plus { margin: 10px 0 0 16px; }
.wctl { margin-left: auto; display: flex; align-items: center; padding-right: 13px; gap: 23px; color: #6b6661; }
.toolbar { height: 36px; background: #ffdfb9; display: flex; align-items: center; padding: 0 0 1px 14px; flex: none; }
.b1 { margin-right: 18px; }
.b2 { margin-right: 16px; }
.b3 { margin-right: 15px; }
.omnibox { width: 1600px; height: 28px; border-radius: 14px; background: #e1c4a4; display: flex; align-items: center; padding: 0 11px; }
.url { margin-left: 10px; flex: 1; line-height: 26px; padding-bottom: 2px; }
.url em { font-style: normal; color: #5f574f; }
.omnibox { padding-right: 10px; }
.key { margin-right: 18px; }
.ext { margin-left: 15px; }
.mus { margin-left: 17px; }
.avatar { width: 22px; height: 22px; margin: 0 20px 0 13px; border-radius: 50%; background: #ec407a; color: #fff; font: 12px/22px Roboto, sans-serif; text-align: center; }
.bookmarks { height: 34px; background: #ffdfb9; border-bottom: 1px solid #a99b8b; display: flex; align-items: center; padding: 0 14px 6px 15px; flex: none; }
.apps { margin: 0 17px 0 10px; width: 35px; }
.gm { margin-left: 8px; flex: 1; }
.vsep { width: 1px; height: 16px; background: #bda88d; }
.fold { margin: 0 9px 0 11px; }
.ob { width: 131px; }
.rl { width: 80px; white-space: nowrap; }

/* pgAdmin */
.page { flex: 1; display: flex; flex-direction: column; min-height: 0; font: 14px Roboto, sans-serif; background: #fff; }
.menu { height: 32px; background: #326690; color: #fff; display: flex; align-items: center; flex: none; }
.brand { display: flex; align-items: center; width: 120px; padding-left: 8px; font-family: "Open Sans", sans-serif; font-size: 20px; line-height: 22px; }
.brand b { width: 30px; height: 23px; border-radius: 3px; background: #fff; color: #326690; font-weight: 800; text-align: center; line-height: 19px; letter-spacing: -.5px; }
.brand strong { font-weight: 800; letter-spacing: -.3px; height: 24px; }
.mi { display: flex; align-items: center; margin-left: 8px; margin-right: 8px; }
.mi svg { width: 9px; height: 6px; margin-left: 4px; }
.mi + .mi { margin-left: 8.5px; }
.split { flex: 1; display: flex; min-height: 0; }
.tree { width: 304px; border-right: 1px solid #dde0e6; flex: none; }
.treehead { height: 32px; border-bottom: 1px solid #dde0e6; display: flex; align-items: center; padding: 0 5px 0 10px; gap: 4px; }
.treehead span { flex: 1; padding-bottom: 2px; }
.treehead button { width: 26px; height: 24px; border: 1px solid #ccd0da; border-radius: 4px; background: #fff; padding: 0; display: flex; align-items: center; justify-content: center; }
.node { height: 22px; background: #d6effc; border-right: 3px solid #326690; display: flex; align-items: center; padding: 0 0 1px 8px; font-size: 13px; }
.node .srv { margin: 0 3px 0 10px; }
.node span { padding-bottom: 1px; }
.main { flex: 1; background: #ebeef3; position: relative; min-width: 0; }
.ptabs, .dtabs { height: 32px; background: #fff; border-bottom: 1px solid #dde0e6; display: flex; position: relative; }
.ptabs span, .dtabs span { padding: 0 10px; line-height: 30px; height: 31px; }
.on { color: #326690; border-bottom: 3px solid #326690; }
.close { margin-left: auto; }
.ptabs .close { margin: 9px 11px 0 auto; }
.dash { padding: 8px 7px; display: flex; flex-direction: column; gap: 8px; }
.card { height: 125px; background: #fff; border: 1px solid #dde0e6; border-radius: 4px; }
.welcome { height: 225px; }
.card h2 { margin: 0; height: 30px; border-bottom: 1px solid #dde0e6; padding-left: 8px; font-size: 14px; line-height: 28px; font-weight: 400; -webkit-text-stroke: .5px #222; }
.wbody { padding: 8px 7px 0 8px; }
.logo { margin-top: 2px; }
h4 { margin: 0 0 7px; font-size: 21px; font-weight: 400; line-height: 26px; }
.wbody p { margin: 0; line-height: 21px; }
.links { display: flex; }
.links a { flex: 1; display: flex; flex-direction: column; align-items: center; padding-top: 8px; }
.links span { line-height: 21px; margin-top: -1px; }
.links .el { margin: 2px 0 6px 3px; }

/* Dialog */
.dialog { position: absolute; left: 552px; top: 38px; width: 502px; height: 552px; background: #ebeef3; border: 1px solid #dde0e6; border-radius: 4px; box-shadow: 0 7px 42px #777f97; display: flex; flex-direction: column; overflow: hidden; }
.dhead { height: 32px; background: #fff; border-bottom: 1px solid #dde0e6; display: flex; align-items: center; padding: 0 11px 3px 13px; flex: none; -webkit-text-stroke: .5px #222; }
.dhead .srv { margin: 2px 3px 0 0; filter: grayscale(.6); }
.dtabs { flex: none; }
.form { flex: 1; padding: 8px 7px 0 13px; }
.row { display: flex; height: 39px; }
label { width: 116px; line-height: 31px; }
.input { width: 363px; height: 31px; border: 1px solid #dde0e6; border-radius: 4px; background: #fff; padding-left: 12px; line-height: 28px; }
.select { display: flex; align-items: center; padding: 0 6px 0 17px; }
.select span { flex: 1; margin-left: 5px; line-height: 27px; padding-bottom: 2px; }
.select .tri { border-width: 5px 4px 0; border-top-color: #888; }
.swatch { width: 27px; height: 27px; margin-top: 2px; border-radius: 4px; border: 1px solid #d5d7db; background: #c8c9ce; display: flex; align-items: center; justify-content: center; }
.check { width: 16px; height: 16px; margin-top: 7px; border-radius: 4px; background: #326690; display: flex; align-items: center; justify-content: center; }
textarea { width: 363px; height: 115px; flex: none; border: 1px solid #dde0e6; border-radius: 4px; background: #fff; }
.foot { height: 48px; background: #fff; border-top: 1px solid #dde0e6; display: flex; align-items: center; gap: 8px; padding: 0 12px; flex: none; }
.foot button { height: 31px; border: 1px solid #b9bfce; border-radius: 4px; background: #fff; color: #222; font: 14px Roboto, sans-serif; padding: 0 0 1px; display: flex; align-items: center; justify-content: center; gap: 3px; }
.foot .ib { width: 31px; border-color: #d5d8e0; }
.foot .qb { width: 37px; }
.foot .cb { width: 82px; margin-left: auto; }
.foot .rb { width: 78px; }
.foot .sb { width: 72px; background: #326690; border-color: #326690; color: #fff; }

.status { position: absolute; left: 0; bottom: 0; width: 252px; height: 23px; background: #ffab45; border-radius: 0 4px 0 0; border-top: 1px solid #ddd; padding-left: 5px; line-height: 20px; white-space: nowrap; }
```
